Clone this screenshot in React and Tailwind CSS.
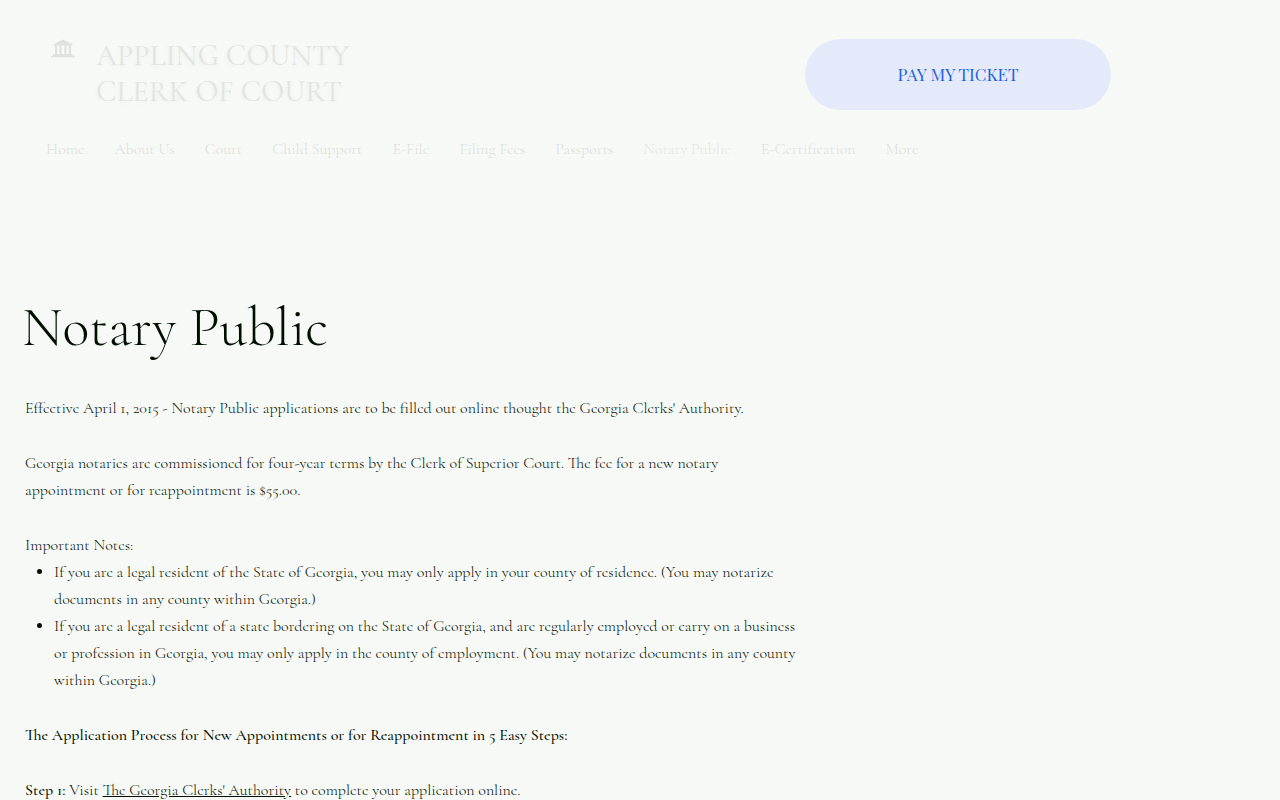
const navItems = [
  'Home',
  'About Us',
  'Court',
  'Child Support',
  'E-File',
  'Filing Fees',
  'Passports',
  'Notary Public',
  'E-Certification',
  'More',
];

function CourthouseIcon() {
  return (
    <svg viewBox="0 0 26 20" className="mt-px h-5 w-[26px]" fill="#dfe1df" aria-hidden="true">
      <path d="M13 0.5 L22.5 5.2 V6.6 H3.5 V5.2 Z" />
      <path d="M5 6.5h2.2v9H5zM9.6 6.5h2v9h-2zM14.4 6.5h2v9h-2zM18.8 6.5H21v9h-2.2z" />
      <path d="M3.2 15.1h19.6v1.7H3.2zM1 16.8h24v1.5H1z" />
    </svg>
  );
}

export default function App() {
  return (
    <div className="min-h-screen overflow-x-hidden bg-[#f7f9f6] font-['Cormorant_Garamond','Liberation_Serif',serif] text-base leading-[27px] font-light text-[#000f00]">
      <header className="pt-[38px]">
        <div className="flex items-start pr-[169px] pl-[50px]">
          <a
            href="#home"
            className="flex items-start gap-5 text-[30px] leading-9 font-normal text-[#e2e4e1] [text-shadow:0_2px_5px_rgba(0,0,0,0.05)]"
          >
            <CourthouseIcon />
            <span>
              APPLING COUNTY
              <br />
              CLERK OF COURT
            </span>
          </a>
          <button
            type="button"
            className="mt-px ml-auto h-[71px] w-[306px] rounded-full bg-[#e5eafb] font-['Playfair_Display','Liberation_Serif',serif] text-[17px] font-normal text-[#1f62dc]"
          >
            PAY MY TICKET
          </button>
        </div>
        <nav className="mt-[26px] flex gap-[30px] pl-[46px] text-[#dcdedb]" aria-label="Main">
          {navItems.map((item) => (
            <a
              key={item}
              href="#"
              aria-current={item === 'Notary Public' ? 'page' : undefined}
              className="whitespace-nowrap aria-[current=page]:text-[#e4e6e3]"
            >
              {item}
            </a>
          ))}
        </nav>
      </header>

      <main className="pt-[130px] pl-[22px]">
        <h1 className="text-[56px] leading-[68px]">Notary Public</h1>
        <div className="mt-[34px] flex max-w-[776px] flex-col gap-7 pl-[3px]">
          <p>
            Effective April 1, 2015 - Notary Public applications are to be filled out online thought the Georgia
            Clerks' Authority.
          </p>
          <p>
            Georgia notaries are commissioned for four-year terms by the Clerk of Superior Court. The fee for a new
            notary
            <br />
            appointment or for reappointment is $55.00.
          </p>
          <div>
            <p>Important Notes:</p>
            <ul className="list-disc pl-[29px]">
              <li>
                If you are a legal resident of the State of Georgia, you may only apply in your county of residence.
                (You may notarize
                <br />
                documents in any county within Georgia.)
              </li>
              <li>
                If you are a legal resident of a state bordering on the State of Georgia, and are regularly employed or
                carry on a business
                <br />
                or profession in Georgia, you may only apply in the county of employment. (You may notarize documents
                in any county
                <br />
                within Georgia.)
              </li>
            </ul>
          </div>
          <p className="font-medium">
            The Application Process for New Appointments or for Reappointment in 5 Easy Steps:
          </p>
          <p>
            <span className="font-medium">Step 1:</span> Visit{' '}
            <a href="#authority" className="underline">
              The Georgia Clerks' Authority
            </a>{' '}
            to complete your application online.
          </p>
        </div>
      </main>
    </div>
  );
}
